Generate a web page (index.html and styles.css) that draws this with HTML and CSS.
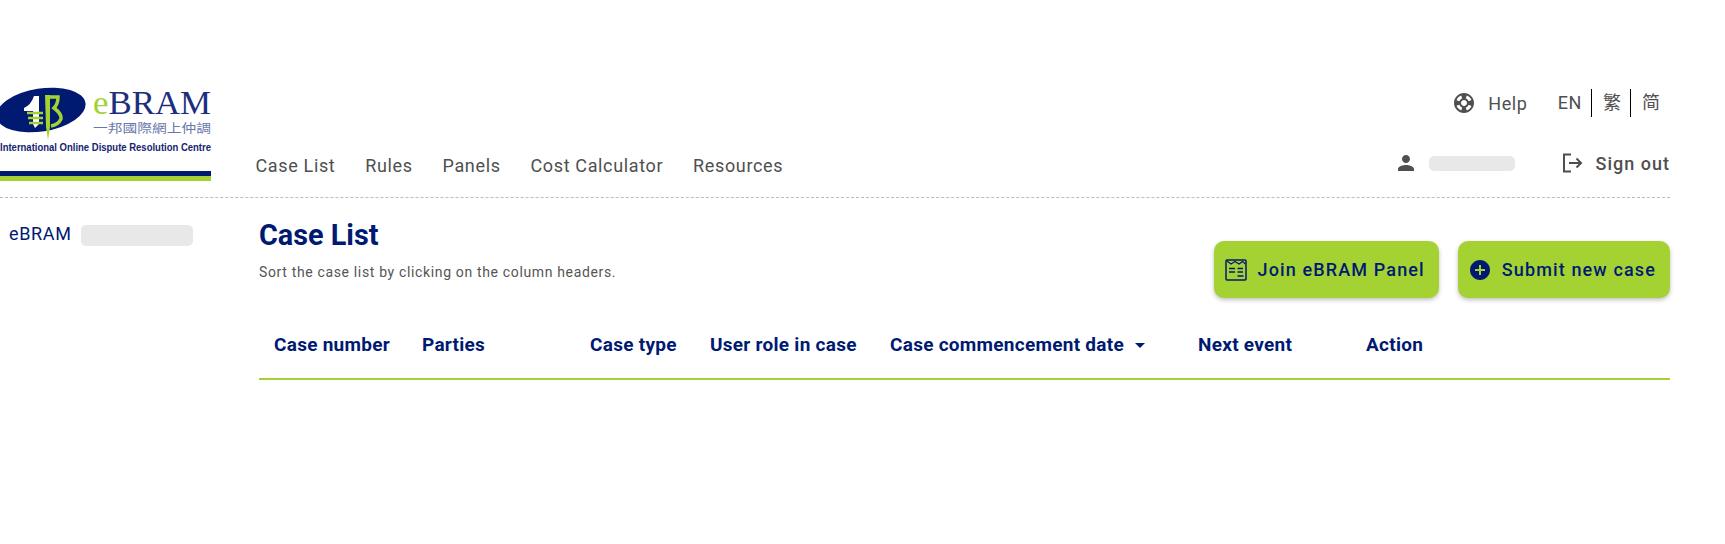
FILE: index.html
```html
<!DOCTYPE html>
<html lang="en">
<head>
<meta charset="utf-8">
<title>Case List</title>
<link rel="stylesheet" href="styles.css">
</head>
<body>
<header class="header">
  <div class="logo">
    <svg class="logo-svg" width="211" height="94" viewBox="0 0 211 94">
      <ellipse cx="41" cy="23" rx="45" ry="21.500" transform="rotate(-9 41 23)" fill="#001a72"/>
      <path fill="#fff" d="M24 21Q31 18 34 9H39V37L35 41L33 37V24H24Z"/>
      <path d="M27 26H43M28 31H43M29 36H43" stroke="#a4d233" stroke-width="2.500"/>
      <path fill="#a4d233" d="M45 8H50V40L48 53L46 40Z"/>
      <path d="M47 10H58Q58 17 54 21Q62 27 61 32Q58 38 51 39" fill="none" stroke="#a4d233" stroke-width="3.500"/>
      <text class="logo-word" x="93" y="27" textLength="118" lengthAdjust="spacingAndGlyphs"><tspan class="logo-e">e</tspan>BRAM</text>
      <text class="logo-cn" x="93" y="46" textLength="118" lengthAdjust="spacingAndGlyphs">一邦國際網上仲調</text>
      <text class="logo-en" x="0" y="63.500" textLength="211" lengthAdjust="spacingAndGlyphs">International Online Dispute Resolution Centre</text>
      <rect x="0" y="84" width="211" height="5" fill="#001a72"/>
      <rect x="0" y="89" width="211" height="5" fill="#a4d233"/>
    </svg>
  </div>
  <div class="head-right">
    <div class="util">
      <svg class="util-help" width="24" height="24" viewBox="0 0 24 24"><path fill="#4f4f4f" d="M12 2C6.480 2 2 6.480 2 12s4.480 10 10 10 10-4.480 10-10S17.520 2 12 2zm7.460 7.120-2.780 1.150a4.980 4.980 0 0 0-2.950-2.940l1.150-2.780c2.100.8 3.770 2.470 4.580 4.570zM12 15c-1.660 0-3-1.340-3-3s1.340-3 3-3 3 1.340 3 3-1.340 3-3 3zM9.130 4.540l1.170 2.780a5 5 0 0 0-2.980 2.970L4.540 9.130c.81-2.110 2.480-3.780 4.590-4.590zM4.540 14.870l2.780-1.150a4.980 4.980 0 0 0 2.970 2.960l-1.170 2.780c-2.100-.81-3.770-2.480-4.580-4.590zm10.340 4.590-1.150-2.780a4.980 4.980 0 0 0 2.950-2.970l2.780 1.170c-.81 2.100-2.480 3.770-4.580 4.580z"/></svg>
      <span class="util-text">Help</span>
      <div class="langs">
        <span class="lang">EN</span>
        <span class="lang lang-sep">繁</span>
        <span class="lang lang-sep">简</span>
      </div>
    </div>
    <div class="navrow">
      <nav class="nav">
        <a class="nav-item">Case List</a>
        <a class="nav-item">Rules</a>
        <a class="nav-item">Panels</a>
        <a class="nav-item">Cost Calculator</a>
        <a class="nav-item">Resources</a>
      </nav>
      <div class="account">
        <svg class="user-icon" width="24" height="24" viewBox="0 0 24 24"><path fill="#4f4f4f" d="M12 12c2.210 0 4-1.790 4-4s-1.790-4-4-4-4 1.790-4 4 1.790 4 4 4zm0 2c-2.670 0-8 1.340-8 4v2h16v-2c0-2.660-5.330-4-8-4z"/></svg>
        <span class="mask mask-user"></span>
        <svg class="signout-icon" width="24" height="24" viewBox="0 0 24 24"><path fill="none" stroke="#4f4f4f" stroke-width="2" d="M11 3.500H4V20.500H11M9 12H21M16.500 7.500L21 12L16.500 16.500"/></svg>
        <span class="signout">Sign out</span>
      </div>
    </div>
  </div>
</header>
<div class="page">
  <aside class="side">
    <span class="side-name">eBRAM</span>
    <span class="mask mask-side"></span>
  </aside>
  <main class="content">
    <div class="title-row">
      <div class="titles">
        <h1 class="title">Case List</h1>
        <p class="subtitle">Sort the case list by clicking on the column headers.</p>
      </div>
      <div class="actions">
        <button class="btn">
          <svg width="24" height="24" viewBox="0 0 24 24" fill="none" stroke="#001a72"><rect x="2" y="2" width="20" height="20" rx="1" stroke-width="1.500"/><path stroke-width="1.200" d="M3 3L7 6L11 3.500L15 6L18.500 3.500L21.500 6"/><path stroke-width="1.300" d="M5 10.500H11M13.500 10.500H19M5 14H11M13.500 14H19M13.500 18H19.500"/></svg>
          Join eBRAM Panel
        </button>
        <button class="btn">
          <svg width="24" height="24" viewBox="0 0 24 24"><path fill="#001a72" d="M12 2C6.480 2 2 6.480 2 12s4.480 10 10 10 10-4.480 10-10S17.520 2 12 2z"/><path fill="#a4d233" d="M17 13h-4v4h-2v-4H7v-2h4V7h2v4h4z"/></svg>
          Submit new case
        </button>
      </div>
    </div>
    <div class="table-head">
      <div class="th">Case number</div>
      <div class="th">Parties</div>
      <div class="th">Case type</div>
      <div class="th">User role in case</div>
      <div class="th">Case commencement date<span class="sort-arrow"></span></div>
      <div class="th">Next event</div>
      <div class="th">Action</div>
    </div>
  </main>
</div>
</body>
</html>
```
FILE: styles.css
```css
* { box-sizing: border-box; }
html, body { margin: 0; padding: 0; background: #fff; }
body { font-family: Roboto, "Noto Sans CJK TC", sans-serif; height: 544px; overflow: hidden; }

.header { display: flex; height: 198px; margin-right: 55px; padding-top: 87px; border-bottom: 1px dashed #bdbdbd; }
.logo { width: 211px; flex: none; }
.logo-svg { display: block; overflow: visible; }
.logo-word { font-family: "Liberation Serif", serif; font-size: 34px; fill: #1c2f7e; }
.logo-e { fill: #a4d233; }
.logo-cn { font-family: "Noto Sans CJK TC", sans-serif; font-size: 12.500px; fill: #6b78aa; }
.logo-en { font-family: "Liberation Sans", sans-serif; font-size: 10.500px; font-weight: 700; fill: #14246e; }

.head-right { flex: 1; margin-left: 44.500px; display: flex; flex-direction: column; }
.util { display: flex; align-items: center; justify-content: flex-end; height: 32px; padding-right: 10px; color: #4f4f4f; font-size: 18px; letter-spacing: .65px; }
.util-help { margin-right: 12px; }
.util-text { margin-right: 30px; }
.langs { display: flex; align-items: center; }
.lang { display: block; line-height: 28px; }
.lang-sep { border-left: 1px solid #000; margin-left: 9px; padding: 0 0 4px 11px; line-height: 24px; font-family: "Noto Sans CJK TC", sans-serif; font-size: 18px; letter-spacing: 0; }

.navrow { display: flex; align-items: center; justify-content: space-between; margin-top: 26px; height: 40px; }
.nav { display: flex; gap: 29.800px; }
.nav-item { font-size: 18px; letter-spacing: .65px; color: #4f4f4f; }
.account { display: flex; align-items: center; color: #4f4f4f; margin-top: -4px; }
.user-icon { margin-right: 11px; }
.mask { display: block; background: #e8e8e8; border-radius: 5px; }
.mask-user { width: 86px; height: 15px; margin-right: 45px; }
.signout-icon { margin-right: 12px; }
.signout { font-size: 18px; font-weight: 500; letter-spacing: 1px; }

.page { display: flex; }
.side { width: 259px; flex: none; display: flex; align-items: center; align-self: flex-start; padding: 25px 0 0 9px; }
.side-name { padding-bottom: 4px; font-size: 18px; letter-spacing: .65px; color: #001a72; }
.mask-side { width: 112px; height: 21px; margin-left: 9px; }

.content { flex: 1; margin-right: 55px; }
.title-row { display: flex; justify-content: space-between; }
.titles { padding-top: 20px; }
.title { margin: 0; font-size: 28.800px; line-height: 34px; font-weight: 700; color: #001a72; }
.subtitle { margin: 10px 0 0; font-size: 14px; line-height: 20px; letter-spacing: .65px; color: #555; }
.actions { display: flex; gap: 19px; padding-top: 43px; }
.btn { display: flex; align-items: center; gap: 10px; height: 57px; padding: 0 14px 0 10px; border: 0; border-radius: 10px; background: #a4d233; color: #001a72; font-family: Roboto, sans-serif; font-size: 18px; font-weight: 500; letter-spacing: 1.130px; box-shadow: 0 2px 4px rgba(0,0,0,.25); }

.table-head { display: grid; grid-template-columns: 148px 168px 120px 180px 308px 168px 1fr; align-items: center; height: 82px; padding: 12px 0 0 15px; border-bottom: 2px solid #a4d233; }
.th { font-size: 19px; font-weight: 700; letter-spacing: .27px; color: #001a72; white-space: nowrap; }
.sort-arrow { display: inline-block; width: 0; height: 0; margin-left: 11px; vertical-align: 3px; border-left: 5.500px solid transparent; border-right: 5.500px solid transparent; border-top: 5.500px solid #001a72; }
```
